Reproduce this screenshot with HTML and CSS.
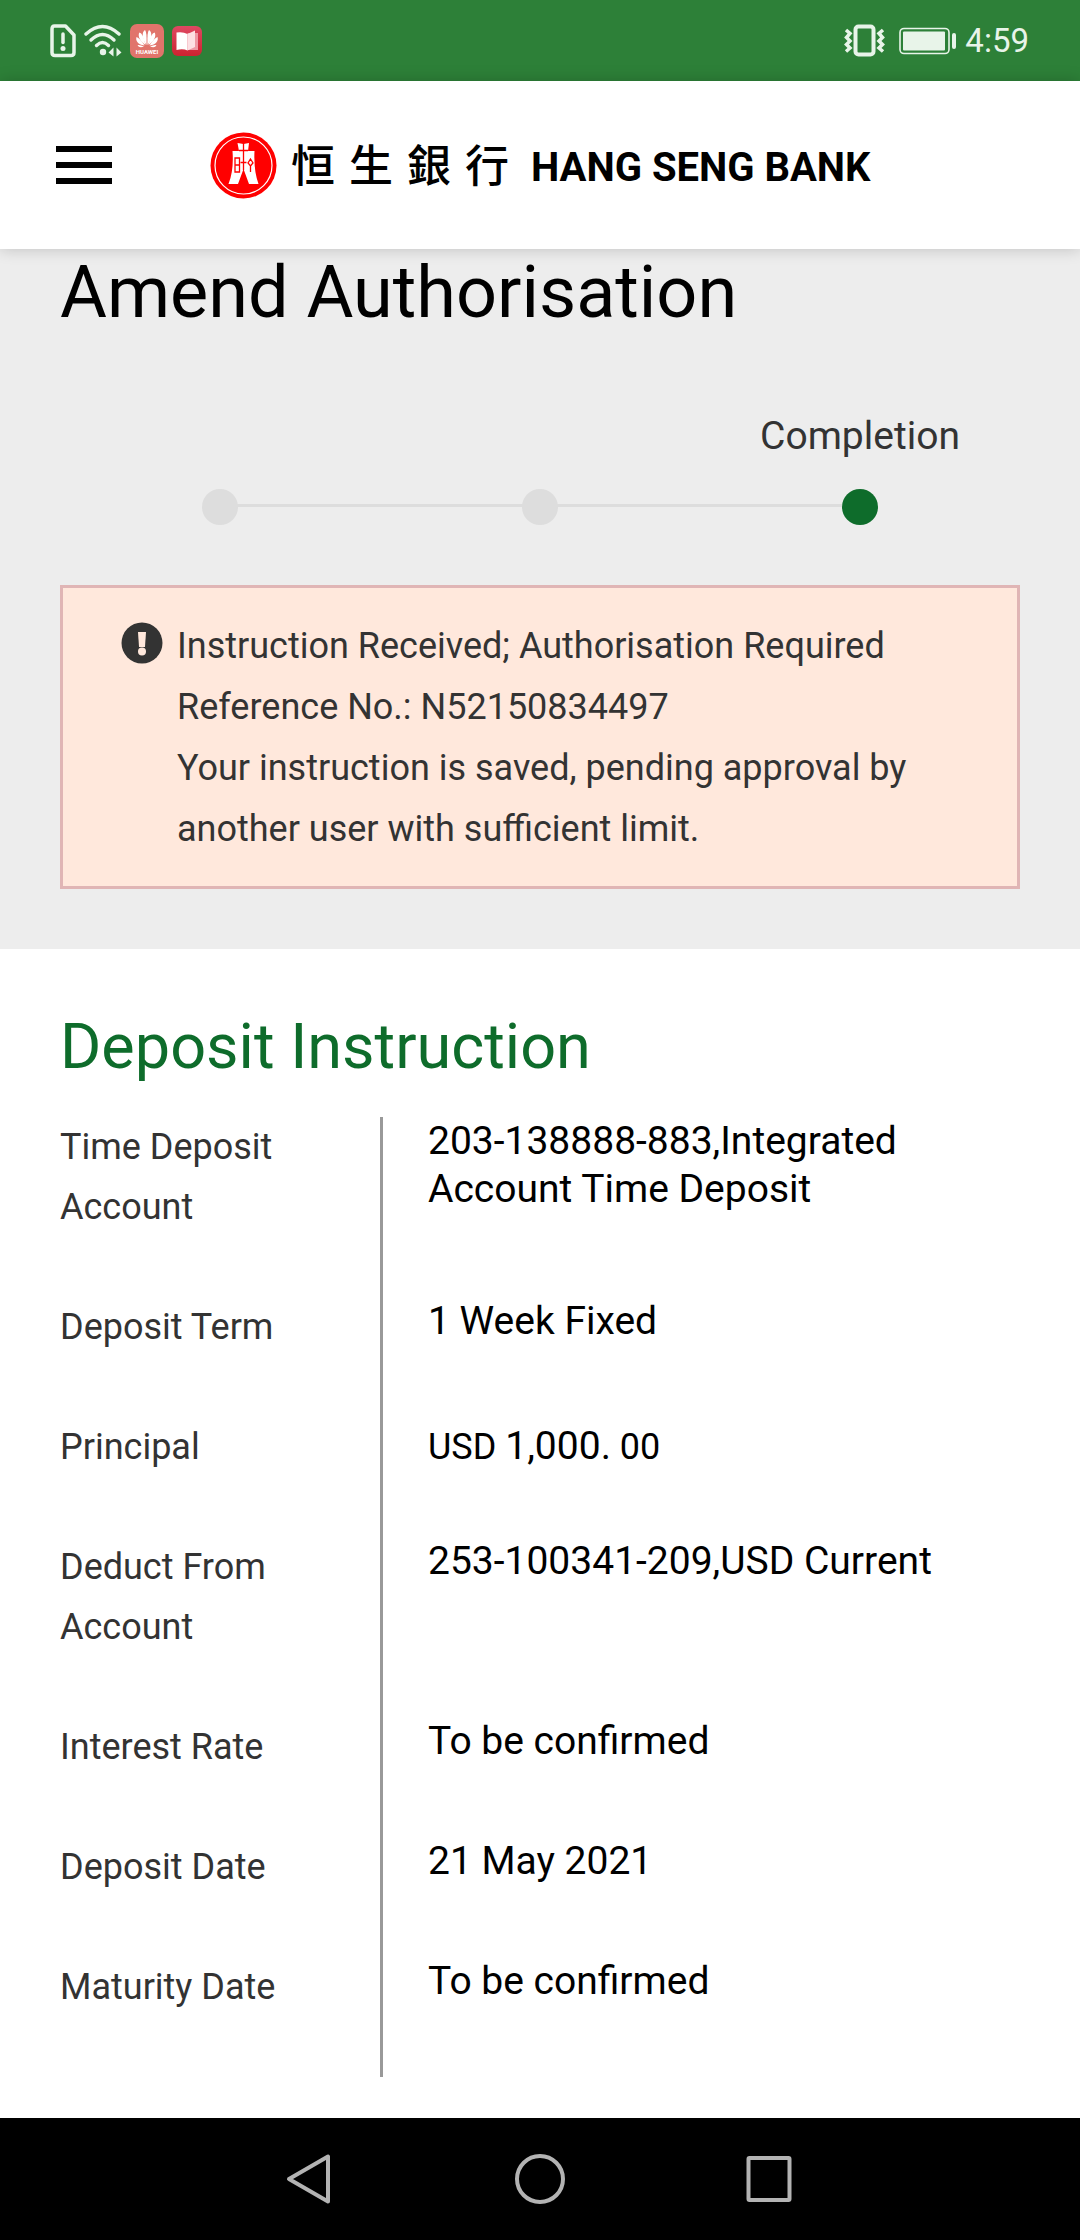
FILE: index.html
```html
<!DOCTYPE html>
<html lang="en">
<head>
  <meta charset="utf-8">
  <meta name="viewport" content="width=device-width, initial-scale=1">
  <title>Amend Authorisation - Hang Seng Bank</title>
  <link rel="stylesheet" href="styles.css">
</head>
<body>
  <div class="status-bar">
    <div class="status-group">
      <svg class="status-sim" width="26" height="34" viewBox="0 0 26 34" aria-hidden="true">
        <path d="M4.500 2H15.500L24 11V28.500Q24 31.500 21 31.500H5Q2 31.500 2 28.500V5Q2 2 4.500 2Z" fill="none" stroke="currentColor" stroke-width="3.500" stroke-linejoin="round"/>
        <path d="M13 10V18.500" stroke="currentColor" stroke-width="3.500" stroke-linecap="round"/>
        <circle cx="13" cy="24.500" r="2.500" fill="currentColor"/>
      </svg>
      <svg class="status-wifi" width="38" height="34" viewBox="0 0 38 34" aria-hidden="true">
        <g fill="none" stroke="currentColor" stroke-width="3.400" stroke-linecap="round">
          <path d="M2 10Q18.500-5 35 10"/>
          <path d="M7 16Q18.500 5 30 16"/>
          <path d="M12.500 21.500Q18.500 15.500 24.500 21.500"/>
        </g>
        <circle cx="19" cy="28" r="3.200" fill="currentColor"/>
        <path d="M29.500 23.500V32.500L24.500 28.500ZM32.500 23.500V32.500L37.500 28.500Z" fill="currentColor"/>
      </svg>
      <svg class="status-huawei" width="34" height="34" viewBox="0 0 34 34" aria-hidden="true">
        <rect width="34" height="34" rx="7" fill="#e1746b"/>
        <g fill="#fff">
          <path d="M16.500 21C12 15 11.500 8 15 6Q17 8 16.500 21Z"/>
          <path d="M17.500 21C22 15 22.500 8 19 6Q17 8 17.500 21Z"/>
          <path d="M15.500 21C8 16 8 10 9.500 8.500Q13 9 15.500 21Z"/>
          <path d="M18.500 21C26 16 26 10 24.500 8.500Q21 9 18.500 21Z"/>
          <path d="M14.500 21.500C7 20.500 5.500 16 6.500 13Q10 14 14.500 21.500Z"/>
          <path d="M19.500 21.500C27 20.500 28.500 16 27.500 13Q24 14 19.500 21.500Z"/>
          <path d="M14 22.500Q9 24.500 7.500 21Q10 20.500 14 22.500ZM20 22.500Q25 24.500 26.500 21Q24 20.500 20 22.500Z"/>
        </g>
        <text class="huawei-name" x="17" y="30" text-anchor="middle">HUAWEI</text>
      </svg>
      <svg class="status-book" width="30" height="30" viewBox="0 0 30 30" aria-hidden="true">
        <defs><linearGradient id="book" x2="0" y2="1"><stop stop-color="#df4862"/><stop offset="1" stop-color="#cc2330"/></linearGradient></defs>
        <rect width="30" height="30" rx="6" fill="url(#book)"/>
        <path d="M15.500 7H26V24H15.500Z" fill="#ee98a4"/>
        <path d="M4.500 6.500Q11 5.500 15.500 8V24.500Q11 22.500 4.500 24Z" fill="#fff"/>
        <path d="M15.500 8L23 4.500V21L15.500 24.500Z" fill="#fde0e4"/>
      </svg>
    </div>
    <div class="status-group">
      <svg class="status-vibrate" width="42" height="34" viewBox="0 0 42 34" aria-hidden="true">
        <g fill="none" stroke="currentColor">
          <rect x="11.500" y="2.500" width="18" height="28" rx="3" stroke-width="4"/>
          <path d="M2 6L6 9.500L2.500 13.500L6 17L2.500 20.500L6 24L2 27.500M39 6L35 9.500L38.500 13.500L35 17L38.500 20.500L35 24L39 27.500" stroke-width="3.500"/>
        </g>
      </svg>
      <svg class="status-battery" width="58" height="28" viewBox="0 0 58 28" aria-hidden="true">
        <rect x="1" y="1.500" width="49" height="25" rx="4" fill="none" stroke="currentColor" stroke-width="1.600"/>
        <rect x="4" y="4.500" width="42" height="19" rx="1" fill="currentColor"/>
        <rect x="53" y="6" width="4" height="16" rx="2" fill="currentColor"/>
      </svg>
      <span>4:59</span>
    </div>
  </div>

  <header class="site-header">
    <button class="menu-button" type="button" aria-label="Open menu">
      <svg width="56" height="38" viewBox="0 0 56 38" aria-hidden="true">
        <path d="M0 3H56M0 19H56M0 35H56" stroke="#000" stroke-width="6"/>
      </svg>
    </button>
    <a class="brand" href="#" aria-label="Hang Seng Bank">
      <svg width="67" height="67" viewBox="0 0 67 67" aria-hidden="true">
        <circle cx="33.500" cy="33.500" r="33" fill="#f00"/>
        <circle cx="33.500" cy="33.500" r="28.500" fill="none" stroke="#fff" stroke-width="1.200"/>
        <path d="M27.500 11L33.500 12L39 11L38 19H44.500Q43.500 38 48.500 52H39L33.500 37L28 52H18.500Q24 38 22.500 19H29Z" fill="#fff"/>
        <g fill="none" stroke="#f00" stroke-width="1.300">
          <path d="M33.500 11V38M29 18.500H38M30.500 30.500H36.500"/>
          <path d="M25 26H29.500V40H25ZM25 33H29.500M40.500 27L43 31L40.500 34L38 31ZM40.500 34V40"/>
        </g>
      </svg>
      <span class="brand-chinese" lang="zh-Hant"><span>恒</span><span>生</span><span>銀</span><span>行</span></span>
      <span class="brand-english">HANG SENG BANK</span>
    </a>
  </header>

  <main>
    <section class="summary">
      <h1>Amend Authorisation</h1>
      <ol class="steps">
        <li class="step"><span class="step-dot"></span></li>
        <li class="step"><span class="step-dot"></span></li>
        <li class="step step-current" aria-current="step"><span>Completion</span><span class="step-dot"></span></li>
      </ol>
      <div class="alert" role="status">
        <svg class="alert-icon" width="42" height="42" viewBox="0 0 42 42" aria-hidden="true">
          <circle cx="21" cy="21" r="20.500" fill="#333"/>
          <path d="M17 10H25L24 25H18Z" fill="#ffe8dc"/>
          <circle cx="21" cy="29.500" r="4" fill="#ffe8dc"/>
        </svg>
        <div>
          <p>Instruction Received; Authorisation Required</p>
          <p>Reference No.: N52150834497</p>
          <p>Your instruction is saved, pending approval by another user with sufficient limit.</p>
        </div>
      </div>
    </section>

    <section class="deposit">
      <h2>Deposit Instruction</h2>
      <dl class="details">
        <dt>Time Deposit Account</dt>
        <dd>203-138888-883,Integrated Account Time Deposit</dd>
        <dt>Deposit Term</dt>
        <dd>1 Week Fixed</dd>
        <dt>Principal</dt>
        <dd class="amount">USD <span class="amount-main">1,000.</span> 00</dd>
        <dt>Deduct From Account</dt>
        <dd>253-100341-209,USD Current</dd>
        <dt>Interest Rate</dt>
        <dd>To be confirmed</dd>
        <dt>Deposit Date</dt>
        <dd>21 May 2021</dd>
        <dt>Maturity Date</dt>
        <dd>To be confirmed</dd>
      </dl>
    </section>
  </main>

  <nav class="system-nav" aria-label="System">
    <button type="button" aria-label="Back">
      <svg width="52" height="52" viewBox="0 0 52 52" aria-hidden="true"><path d="M44 3.500V48.500L5 26Z"/></svg>
    </button>
    <button type="button" aria-label="Home">
      <svg width="52" height="52" viewBox="0 0 52 52" aria-hidden="true"><circle cx="26" cy="26" r="23"/></svg>
    </button>
    <button type="button" aria-label="Recent apps">
      <svg width="52" height="52" viewBox="0 0 52 52" aria-hidden="true"><rect x="4.500" y="5" width="41" height="42" rx="1"/></svg>
    </button>
  </nav>
</body>
</html>
```
FILE: styles.css
```css
* {
  box-sizing: border-box;
}

body {
  display: flex;
  flex-direction: column;
  min-height: 100vh;
  margin: 0;
  background: #fff;
  color: #333;
  font: 36px/60px Roboto, "Noto Sans", sans-serif;
}

h1,
h2,
p,
ol,
dl,
dd {
  margin: 0;
  padding: 0;
}

button {
  display: flex;
  padding: 0;
  border: 0;
  background: none;
  cursor: pointer;
}

svg {
  display: block;
  flex: none;
}

/* Status bar */
.status-bar {
  display: flex;
  justify-content: space-between;
  align-items: center;
  height: 81px;
  padding: 0 51px 0 50px;
  background: #2d8038;
  color: #e8f4e9;
  font-size: 33px;
}

.status-group {
  display: flex;
  align-items: center;
  gap: 8px;
}

.status-vibrate {
  margin-right: 5px;
}

.huawei-name {
  fill: #fff;
  font-size: 6px;
  font-weight: 700;
}

/* Header */
.site-header {
  position: relative;
  display: flex;
  align-items: center;
  gap: 98px;
  height: 168px;
  padding: 0 56px;
  background: #fff;
  box-shadow: 0 0 15px rgba(0, 0, 0, 0.2);
}

.brand {
  display: flex;
  align-items: center;
  color: #000;
  text-decoration: none;
}

.brand-chinese {
  display: flex;
  gap: 14px;
  margin: 0 22px 0 14px;
  padding-bottom: 4px;
  font: 500 44px/60px "Noto Sans CJK TC", sans-serif;
}

.brand-english {
  padding-top: 6px;
  font-size: 40px;
  font-weight: 700;
  white-space: nowrap;
}

/* Summary */
.summary {
  padding: 0 60px 60px;
  background: #ededed;
}

h1 {
  color: #000;
  font-size: 72px;
  font-weight: 400;
  line-height: 88px;
}

.steps {
  display: grid;
  grid-template-columns: repeat(3, 1fr);
  align-items: end;
  padding: 69px 0 60px;
  list-style: none;
}

.step {
  position: relative;
  display: flex;
  flex-direction: column;
  align-items: center;
  gap: 23px;
  font-size: 39px;
}

.step + .step::before {
  content: "";
  position: absolute;
  right: 50%;
  bottom: 18px;
  width: 100%;
  height: 3px;
  background: #ddd;
}

.step-dot {
  position: relative;
  z-index: 1;
  width: 36px;
  height: 36px;
  border-radius: 50%;
  background: #ddd;
}

.step-current .step-dot {
  background: #0e6c2b;
}

.alert {
  display: flex;
  gap: 14px;
  padding: 28px 58px 26px;
  border: 3px solid #e0b5b5;
  background: #ffe8dc;
  line-height: 61px;
}

.alert-icon {
  margin-top: 6px;
}

/* Deposit details */
.deposit {
  padding: 61px 60px 41px;
}

h2 {
  padding-bottom: 33px;
  color: #0e6c2b;
  font-size: 63px;
  font-weight: 400;
  line-height: 74px;
}

.details {
  display: grid;
  grid-template-columns: 1fr 2fr;
}

dt {
  padding-bottom: 60px;
}

dd {
  padding-left: 45px;
  border-left: 3px solid #999;
  color: #000;
  font-size: 39px;
  line-height: 48px;
}

.amount {
  font-size: 36px;
  line-height: 60px;
}

.amount-main {
  font-size: 39px;
  line-height: 48px;
}

/* System navigation */
main {
  flex: 1;
}

.system-nav {
  display: flex;
  justify-content: center;
  align-items: center;
  gap: 178px;
  height: 122px;
  background: #000;
}

.system-nav svg {
  fill: none;
  stroke: #b3b3b3;
  stroke-width: 4;
  stroke-linejoin: round;
}
```
